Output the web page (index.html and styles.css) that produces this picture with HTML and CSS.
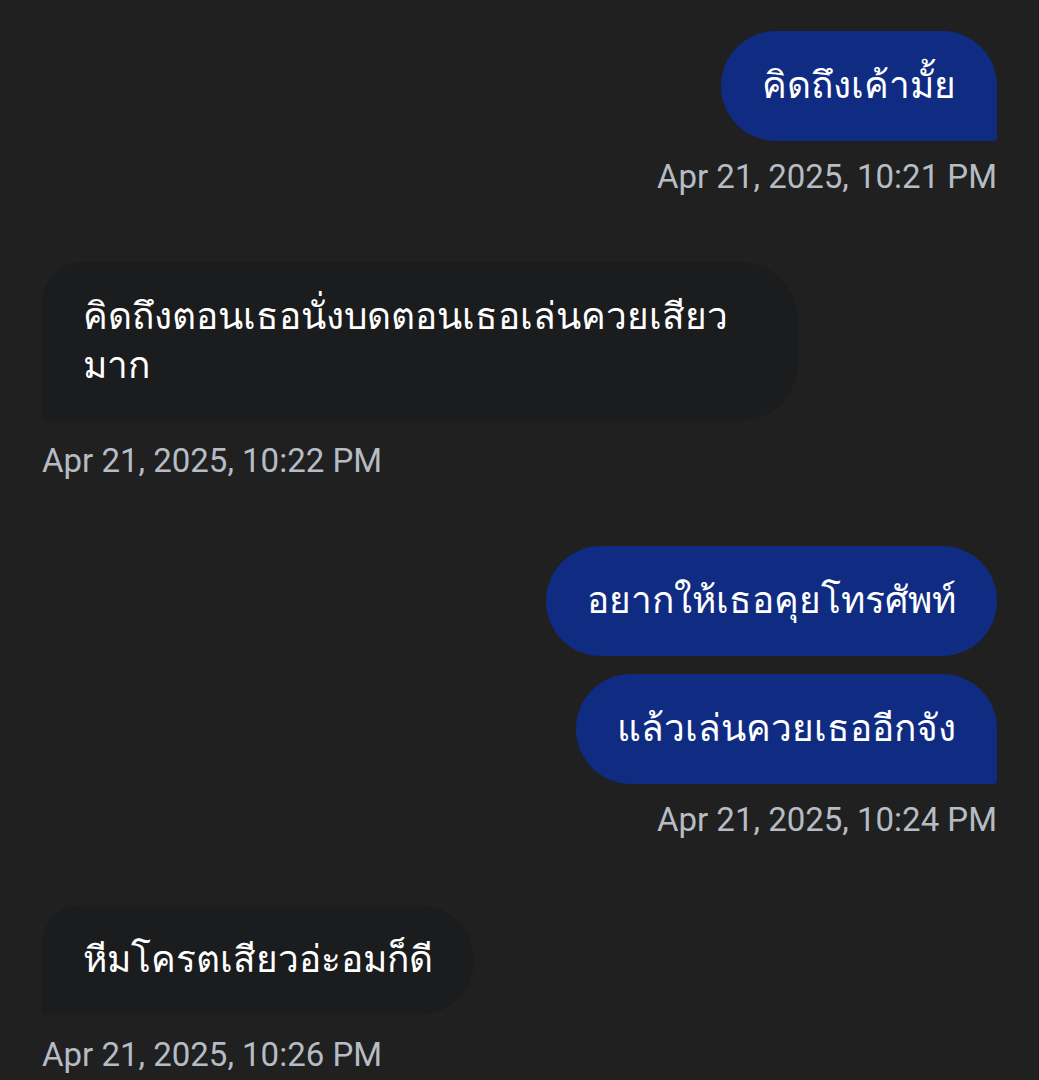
FILE: index.html
```html
<!DOCTYPE html>
<html lang="th">

<head>
  <meta charset="UTF-8">
  <meta name="viewport" content="width=device-width, initial-scale=1.0">
  <title>Chat</title>
  <link rel="stylesheet" href="styles.css">
</head>

<body>
  <main class="thread">
    <div class="group sent">
      <div class="bubble">คิดถึงเค้ามั้ย</div>
      <div class="time">Apr 21, 2025, 10:21 PM</div>
    </div>

    <div class="group received">
      <div class="bubble">คิดถึงตอนเธอนั่งบดตอนเธอเล่นควยเสียวมาก</div>
      <div class="time">Apr 21, 2025, 10:22 PM</div>
    </div>

    <div class="group sent">
      <div class="bubble">อยากให้เธอคุยโทรศัพท์</div>
      <div class="bubble">แล้วเล่นควยเธออีกจัง</div>
      <div class="time">Apr 21, 2025, 10:24 PM</div>
    </div>

    <div class="group received">
      <div class="bubble">หีมโครตเสียวอ่ะอมก็ดี</div>
      <div class="time">Apr 21, 2025, 10:26 PM</div>
    </div>
  </main>
</body>

</html>
```

FILE: styles.css
```css
body {
  margin: 0;
  padding: 0;
  background-color: #202020;
  font-family: Roboto, "Noto Sans", "DejaVu Sans", sans-serif;
}

.thread {
  padding: 31px 42px 0 42px;
  display: flex;
  flex-direction: column;
  gap: 65px;
}

.group {
  display: flex;
  flex-direction: column;
  gap: 18px;
}

.group.sent {
  align-items: flex-end;
}

.group.received {
  align-items: flex-start;
}

.bubble {
  max-width: 674px;
  padding: 30px 41px 31px 41px;
  font-size: 37px;
  line-height: 49px;
  color: #ffffff;
  border-radius: 55px;
}

.sent .bubble {
  background-color: #0f2c82;
}

.sent .bubble:nth-last-child(2) {
  border-bottom-right-radius: 4px;
}

.received .bubble {
  background-color: #1a1c1e;
  border-radius: 40px 58px 58px 4px;
}

.time {
  margin-top: -2px;
  font-size: 33px;
  line-height: 40px;
  color: #b6bcc4;
}

.received .time {
  margin-top: 2px;
}
```
